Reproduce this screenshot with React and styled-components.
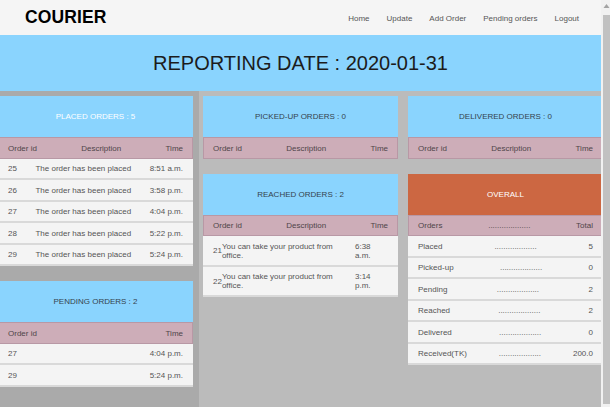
import React from "react";
import styled, { createGlobalStyle } from "styled-components";

const Global = createGlobalStyle`
  html, body { margin: 0; padding: 0; height: 100%; overflow: hidden; background: #bbbbbb; }
  body { font-family: "Liberation Sans", Arial, sans-serif; }
  #root { height: 100%; }
  * { box-sizing: border-box; }
`;

const Shell = styled.div`
  display: flex;
  width: 610px;
  height: 407px;
  overflow: hidden;
`;

const Page = styled.div`
  width: 601px;
  flex: none;
  display: flex;
  flex-direction: column;
  overflow: hidden;
  background: #bbbbbb;
`;

const ScrollTrack = styled.div`
  width: 9px;
  flex: none;
  background: #f1f1f1;
  display: flex;
  flex-direction: column;
  align-items: flex-end;
  padding-bottom: 3px;
`;

const ScrollArrow = styled.svg`
  width: 9px;
  height: 15px;
  flex: none;
`;

const ScrollThumb = styled.div`
  width: 7px;
  flex: 1;
  background: #c1c1c1;
`;

const NavBar = styled.header`
  height: 35px;
  flex: none;
  background: #f5f5f5;
  display: flex;
  align-items: center;
  justify-content: space-between;
  padding: 0 22px 0 25px;
`;

const Brand = styled.div`
  font-size: 17.5px;
  font-weight: bold;
  color: #000;
  letter-spacing: 0.1px;
`;

const NavLinks = styled.nav`
  display: flex;
  gap: 17px;
  padding-top: 1px;
`;

const NavLink = styled.a`
  font-size: 8px;
  color: #555;
  text-decoration: none;
`;

const Banner = styled.div`
  height: 56px;
  flex: none;
  background: #8ad4fe;
  display: flex;
  align-items: center;
  justify-content: center;
  font-size: 20px;
  color: #1c1c1c;
`;

const Main = styled.main`
  flex: 1;
  display: flex;
  margin-left: -2px;
`;

const LeftCol = styled.div`
  width: 201px;
  flex: none;
  background: #aaaaaa;
  padding: 5px 6px 0 0;
  display: flex;
  flex-direction: column;
  gap: 15px;
`;

const RightArea = styled.div`
  flex: none;
  display: flex;
  gap: 10px;
  padding: 5px 0 0 4px;
`;

const Column = styled.div`
  width: 195px;
  flex: none;
  display: flex;
  flex-direction: column;
  gap: 15px;
`;

const Panel = styled.section`
  width: 195px;
  display: flex;
  flex-direction: column;
  font-size: 8px;
`;

const PanelHead = styled.div`
  height: 41px;
  background: ${(p) => (p.$tone === "orange" ? "#cc6742" : "#8ad4fe")};
  color: ${(p) => (p.$light ? "#ffffff" : "#35434d")};
  display: flex;
  align-items: center;
  justify-content: center;
  font-size: 8px;
`;

const HeadRow = styled.div`
  height: 21.5px;
  background: #cdadb8;
  border: 1px solid #b898a5;
  display: flex;
  align-items: center;
  justify-content: space-between;
  padding: 1px 9px 0;
  color: #4f4549;
`;

const Row = styled.div`
  min-height: 21.5px;
  background: #f4f4f4;
  border-bottom: 2px solid #d9d9d9;
  display: flex;
  align-items: center;
  justify-content: space-between;
  padding: 5.75px 10px 4.75px;
  line-height: 9px;
  color: #555;
`;

const Cell = styled.span`
  text-align: left;
`;

const Dots = styled.span`
  letter-spacing: 0;
`;

const placed = [
  ["25", "8:51 a.m."],
  ["26", "3:58 p.m."],
  ["27", "4:04 p.m."],
  ["28", "5:22 p.m."],
  ["29", "5:24 p.m."],
];

const pending = [
  ["27", "4:04 p.m."],
  ["29", "5:24 p.m."],
];

const reached = [
  ["21", "6:38 a.m."],
  ["22", "3:14 p.m."],
];

const overall = [
  ["Placed", "5"],
  ["Picked-up", "0"],
  ["Pending", "2"],
  ["Reached", "2"],
  ["Delivered", "0"],
  ["Received(TK)", "200.0"],
];

const DOTS = "...................";

function OrderHead({ withDesc = true }) {
  return (
    <HeadRow>
      <Cell>Order id</Cell>
      {withDesc && <Cell>Description</Cell>}
      <Cell>Time</Cell>
    </HeadRow>
  );
}

export default function App() {
  return (
    <Shell>
      <Global />
      <Page>
        <NavBar>
          <Brand>COURIER</Brand>
          <NavLinks>
            <NavLink>Home</NavLink>
            <NavLink>Update</NavLink>
            <NavLink>Add Order</NavLink>
            <NavLink>Pending orders</NavLink>
            <NavLink>Logout</NavLink>
          </NavLinks>
        </NavBar>
        <Banner>REPORTING DATE : 2020-01-31</Banner>
        <Main>
          <LeftCol>
            <Panel>
              <PanelHead $light>PLACED ORDERS : 5</PanelHead>
              <OrderHead />
              {placed.map(([id, t]) => (
                <Row key={id}>
                  <Cell>{id}</Cell>
                  <Cell>The order has been placed</Cell>
                  <Cell>{t}</Cell>
                </Row>
              ))}
            </Panel>
            <Panel>
              <PanelHead>PENDING ORDERS : 2</PanelHead>
              <OrderHead withDesc={false} />
              {pending.map(([id, t]) => (
                <Row key={id}>
                  <Cell>{id}</Cell>
                  <Cell>{t}</Cell>
                </Row>
              ))}
            </Panel>
          </LeftCol>
          <RightArea>
            <Column>
              <Panel>
                <PanelHead>PICKED-UP ORDERS : 0</PanelHead>
                <OrderHead />
              </Panel>
              <Panel>
                <PanelHead>REACHED ORDERS : 2</PanelHead>
                <OrderHead />
                {reached.map(([id, t]) => (
                  <Row key={id}>
                    <Cell>{id}</Cell>
                    <Cell>You can take your product from office.</Cell>
                    <Cell>{t}</Cell>
                  </Row>
                ))}
              </Panel>
            </Column>
            <Column>
              <Panel>
                <PanelHead>DELIVERED ORDERS : 0</PanelHead>
                <OrderHead />
              </Panel>
              <Panel>
                <PanelHead $tone="orange" $light>OVERALL</PanelHead>
                <HeadRow>
                  <Cell>Orders</Cell>
                  <Dots>{DOTS}</Dots>
                  <Cell>Total</Cell>
                </HeadRow>
                {overall.map(([label, v]) => (
                  <Row key={label}>
                    <Cell>{label}</Cell>
                    <Dots>{DOTS}</Dots>
                    <Cell>{v}</Cell>
                  </Row>
                ))}
              </Panel>
            </Column>
          </RightArea>
        </Main>
      </Page>
      <ScrollTrack>
        <ScrollArrow viewBox="0 0 9 15">
          <polygon points="5.5,4 8.5,8 2.5,8" fill="#a3a3a3" />
        </ScrollArrow>
        <ScrollThumb />
      </ScrollTrack>
    </Shell>
  );
}
